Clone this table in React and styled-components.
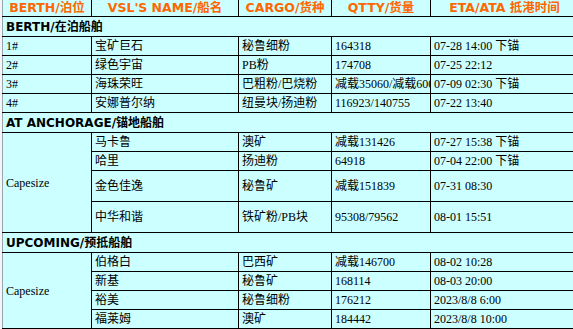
import styled, { createGlobalStyle } from "styled-components";

const GlobalStyle = createGlobalStyle`
html, body {
  margin: 0;
  padding: 0;
  overflow: hidden;
  background: #f4f6f8;
}
`;

const Table = styled.table`
margin-left: 2px;
width: 576px;
table-layout: fixed;
border-collapse: collapse;
background: #ccffff;
font-family: "Liberation Serif", "Noto Sans CJK SC", serif;
font-size: 12px;
line-height: 14px;
color: #000;
border-left: 1px solid #9aa3b0;
`;

const HeadCell = styled.td`
height: 16px;
padding: 0 2px;
text-align: center;
color: #ff6600;
font-family: "DejaVu Sans", "Noto Sans CJK SC", sans-serif;
font-weight: bold;
font-size: 12.5px;
line-height: 14px;
white-space: nowrap;
overflow: hidden;
border-right: 1px solid #000;
border-bottom: 1px solid #000;
`;

const SectionCell = styled.td`
height: 19px;
padding: 0 3px;
font-family: "DejaVu Sans", "Noto Sans CJK SC", sans-serif;
font-weight: bold;
font-size: 12px;
line-height: 14px;
border-bottom: 1px solid #000;
white-space: nowrap;
`;

const Cell = styled.td`
height: ${(p) => (p.$tall ? "30px" : "18px")};
padding: 0 3px;
white-space: nowrap;
overflow: hidden;
text-overflow: clip;
border-right: 1px solid #000;
border-bottom: 1px solid #000;
`;

const columns = [
  { w: 89, t: "BERTH/泊位" },
  { w: 147, t: "VSL'S NAME/船名" },
  { w: 93, t: "CARGO/货种" },
  { w: 99, t: "QTTY/货量" },
  { w: 148, t: "ETA/ATA 抵港时间" },
];

const berth = [
  ["1#", "宝矿巨石", "秘鲁细粉", "164318", "07-28 14:00 下锚"],
  ["2#", "绿色宇宙", "PB粉", "174708", "07-25 22:12"],
  ["3#", "海珠荣旺", "巴粗粉/巴烧粉", "减载35060/减载60000", "07-09 02:30 下锚"],
  ["4#", "安娜普尔纳", "纽曼块/扬迪粉", "116923/140755", "07-22 13:40"],
];

const anchorage = [
  ["马卡鲁", "澳矿", "减载131426", "07-27 15:38 下锚"],
  ["哈里", "扬迪粉", "64918", "07-04 22:00 下锚"],
  ["金色佳逸", "秘鲁矿", "减载151839", "07-31 08:30", true],
  ["中华和谐", "铁矿粉/PB块", "95308/79562", "08-01 15:51", true],
];

const upcoming = [
  ["伯格白", "巴西矿", "减载146700", "08-02 10:28"],
  ["新基", "秘鲁矿", "168114", "08-03 20:00"],
  ["裕美", "秘鲁细粉", "176212", "2023/8/8 6:00"],
  ["福莱姆", "澳矿", "184442", "2023/8/8 10:00"],
];

const GroupRows = ({ label, rows }) =>
  rows.map((r, i) => (
    <tr key={i}>
      {i === 0 && <Cell rowSpan={rows.length}>{label}</Cell>}
      {r.slice(0, 4).map((v, j) => (
        <Cell key={j} $tall={r[4]}>
          {v}
        </Cell>
      ))}
    </tr>
  ));

const App = () => {
  return (
    <>
      <GlobalStyle />
      <Table>
        <colgroup>
          {columns.map((c) => (
            <col key={c.t} style={{ width: c.w }} />
          ))}
        </colgroup>
        <tbody>
          <tr>
            {columns.map((c) => (
              <HeadCell key={c.t}>{c.t}</HeadCell>
            ))}
          </tr>
          <tr>
            <SectionCell colSpan={5}>BERTH/在泊船舶</SectionCell>
          </tr>
          {berth.map((r) => (
            <tr key={r[0]}>
              {r.map((v, j) => (
                <Cell key={j}>{v}</Cell>
              ))}
            </tr>
          ))}
          <tr>
            <SectionCell colSpan={5}>AT ANCHORAGE/锚地船舶</SectionCell>
          </tr>
          <GroupRows label="Capesize" rows={anchorage} />
          <tr>
            <SectionCell colSpan={5}>UPCOMING/预抵船舶</SectionCell>
          </tr>
          <GroupRows label="Capesize" rows={upcoming} />
        </tbody>
      </Table>
    </>
  );
};

export default App;
